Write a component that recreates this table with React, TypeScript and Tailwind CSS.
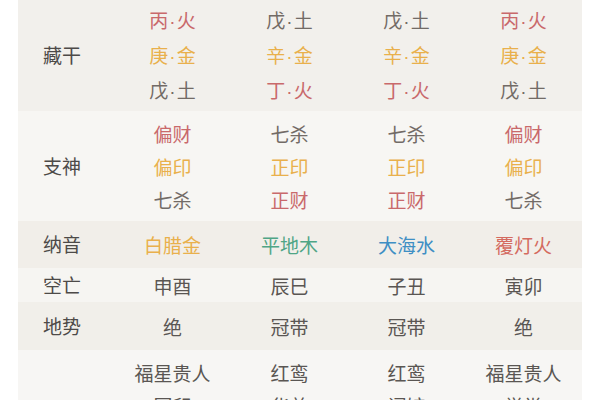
const RED = "text-[#c9696b]";
const GOLD = "text-[#e9b04c]";
const GRAY = "text-[#726b66]";
const DARK = "text-[#5a5653]";

type Cell = { text: string; color: string };

type Row = {
  label: string;
  height: string;
  bg: string;
  justify: string;
  cells: Cell[][];
};

const c = (text: string, color: string = GRAY): Cell => ({ text, color });

const rows: Row[] = [
  {
    label: "藏干",
    height: "h-[111px]",
    bg: "bg-[#f2f0ec]",
    justify: "justify-center",
    cells: [
      [c("丙·火", RED), c("庚·金", GOLD), c("戊·土")],
      [c("戊·土"), c("辛·金", GOLD), c("丁·火", RED)],
      [c("戊·土"), c("辛·金", GOLD), c("丁·火", RED)],
      [c("丙·火", RED), c("庚·金", GOLD), c("戊·土")],
    ],
  },
  {
    label: "支神",
    height: "h-[110px]",
    bg: "bg-[#f7f6f3]",
    justify: "justify-center",
    cells: [
      [c("偏财", RED), c("偏印", GOLD), c("七杀")],
      [c("七杀"), c("正印", GOLD), c("正财", RED)],
      [c("七杀"), c("正印", GOLD), c("正财", RED)],
      [c("偏财", RED), c("偏印", GOLD), c("七杀")],
    ],
  },
  {
    label: "纳音",
    height: "h-[47px]",
    bg: "bg-[#f1eee9]",
    justify: "justify-center",
    cells: [
      [c("白腊金", GOLD)],
      [c("平地木", "text-[#4fa586]")],
      [c("大海水", "text-[#3f8fc4]")],
      [c("覆灯火", "text-[#d46a5f]")],
    ],
  },
  {
    label: "空亡",
    height: "h-[34px]",
    bg: "bg-[#f6f5f2]",
    justify: "justify-center",
    cells: [[c("申酉", DARK)], [c("辰巳", DARK)], [c("子丑", DARK)], [c("寅卯", DARK)]],
  },
  {
    label: "地势",
    height: "h-[48px]",
    bg: "bg-[#f1efea]",
    justify: "justify-center",
    cells: [[c("绝", DARK)], [c("冠带", DARK)], [c("冠带", DARK)], [c("绝", DARK)]],
  },
  {
    label: "",
    height: "h-[80px]",
    bg: "bg-[#f7f6f4]",
    justify: "justify-start pt-[6px]",
    cells: [
      [c("福星贵人", DARK), c("国印", DARK)],
      [c("红鸾", DARK), c("华盖", DARK)],
      [c("红鸾", DARK), c("词馆", DARK)],
      [c("福星贵人", DARK), c("学堂", DARK)],
    ],
  },
];

function CellText({ cell }: { cell: Cell }) {
  const parts = cell.text.split("·");
  return (
    <span className={`text-[19px] leading-[33px] ${cell.color}`}>
      {parts.length === 2 ? (
        <>
          {parts[0]}
          <span
            className="mx-[1px]"
            style={{ fontFamily: '"Liberation Sans", sans-serif' }}
          >
            ·
          </span>
          {parts[1]}
        </>
      ) : (
        cell.text
      )}
    </span>
  );
}

export default function App() {
  return (
    <div
      className="h-[400px] w-[600px] overflow-hidden bg-white px-[18px]"
      style={{ fontFamily: '"Noto Sans CJK SC", "Noto Sans", sans-serif' }}
    >
      <div className="flex flex-col">
        {rows.map((row, i) => (
          <div
            className={`grid shrink-0 grid-cols-[96px_repeat(4,1fr)] ${row.height} ${row.bg}`}
            key={i}
          >
            <div className="flex items-center justify-center pr-[8px] text-[19px] text-[#4d4a48]">
              {row.label}
            </div>
            {row.cells.map((col, j) => (
              <div
                className={`flex flex-col items-center ${row.justify}`}
                key={j}
              >
                {col.map((cell, k) => (
                  <CellText cell={cell} key={k} />
                ))}
              </div>
            ))}
          </div>
        ))}
      </div>
    </div>
  );
}
